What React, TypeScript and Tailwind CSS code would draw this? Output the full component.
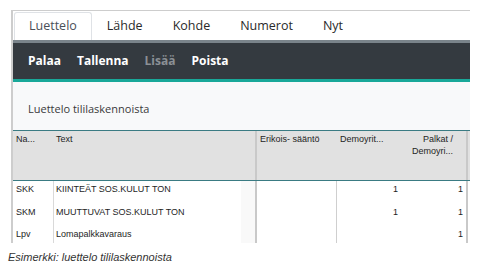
import React from "react";

const tabs = ["Luettelo", "Lähde", "Kohde", "Numerot", "Nyt"];

const rows = [
  { a: "SKK", b: "KIINTEÄT SOS.KULUT TON", d: "1", e: "1" },
  { a: "SKM", b: "MUUTTUVAT SOS.KULUT TON", d: "1", e: "1" },
  { a: "Lpv", b: "Lomapalkkavaraus", d: "", e: "1" },
];

export default function App() {
  return (
    <div className="w-[496px] h-[270px] bg-white overflow-hidden" style={{ fontFamily: '"Open Sans", sans-serif' }}>
      <div className="ml-[11px] mt-[10px] w-[459px] border-t border-l-2 border-[#cdcdcd]">
        {/* tabs */}
        <div className="flex h-[29px] pt-[1px] pl-[1px] bg-white">
          {tabs.map((t, i) => (
            <div
              key={t}
              className={
                i === 0
                  ? "h-[28px] px-[14px] flex items-center text-[12.5px] text-[#4a5058] border border-b-0 border-[#dfe2e6] rounded-t-[3px] bg-white"
                  : "h-[28px] px-[15px] flex items-center text-[12.5px] text-[#2a2a2a]"
              }
            >
              {t}
            </div>
          ))}
        </div>
        <div className="h-[3px] bg-[#7a848b]" />
        <div className="h-[36px] bg-[#343a40] flex items-center pl-[15px] gap-[16px] text-[12px] font-bold text-white">
          <span>Palaa</span>
          <span>Tallenna</span>
          <span className="text-[#8b9095]">Lisää</span>
          <span>Poista</span>
        </div>
        <div className="h-[3px] bg-[#19a899]" />
        <div className="h-[48px] bg-[#f8f9fa] pl-[15px] pt-[19px] text-[11px] leading-[16px] text-[#3a3a3a]">
          Luettelo tililaskennoista
        </div>
        {/* table */}
        <div style={{ fontFamily: '"Liberation Sans", Arial, sans-serif' }} className="text-[9px] leading-[12px] text-[#1e1e1e]">
          <div className="flex h-[51px] bg-[#e1e1e1] border-t border-b border-[#3a7b83]">
            <div className="w-[41px] shrink-0 pl-[3px] pt-[2px]">Na...</div>
            <div className="w-[203px] shrink-0 pl-[2px] pt-[2px] border-r-2 border-[#c9c9c9]">Text</div>
            <div className="w-[80px] shrink-0 pl-[3px] pt-[2px]">Erikois- sääntö</div>
            <div className="w-[64px] shrink-0 pl-[3px] pt-[2px]">Demoyrit...</div>
            <div className="w-[67px] shrink-0 pr-[13px] pt-[2px] text-right border-r-2 border-[#c9c9c9]">
              Palkat /<br />Demoyri...
            </div>
            <div className="flex-1" />
          </div>
          <div className="h-[62px] overflow-hidden bg-white">
            {rows.map((r) => (
              <div key={r.a} className="flex h-[22.5px]">
                <div className="w-[41px] shrink-0 pl-[3px] pt-[2px] border-r border-[#d9d9d9]">{r.a}</div>
                <div className="w-[203px] shrink-0 pl-[2px] pt-[2px] border-r-2 border-[#c9c9c9] bg-[linear-gradient(to_right,#ffffff_93%,#f9f9f9_93%)]">
                  {r.b}
                </div>
                <div className="w-[80px] shrink-0 border-r border-[#cfcfcf]" />
                <div className="w-[64px] shrink-0 pr-[3px] pt-[2px] text-right">{r.d}</div>
                <div className="w-[67px] shrink-0 pr-[3px] pt-[2px] text-right border-r-2 border-[#c9c9c9]">{r.e}</div>
                <div className="flex-1" />
              </div>
            ))}
          </div>
        </div>
      </div>
      <div
        className="mt-[7px] ml-[8px] text-[11px] leading-[14px] italic text-[#333]"
        style={{ fontFamily: '"Liberation Sans", Arial, sans-serif' }}
      >
        Esimerkki: luettelo tililaskennoista
      </div>
    </div>
  );
}
